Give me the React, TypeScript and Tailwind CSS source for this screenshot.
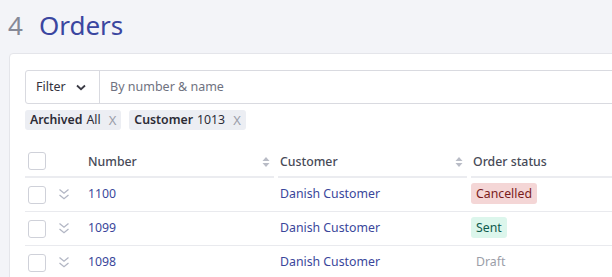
import React from "react";

const SortIcon = () => (
  <svg width="8" height="12" viewBox="0 0 8 12" className="shrink-0">
    <path d="M4 1 L7.5 5 H0.5 Z" fill="#b9bcc6" />
    <path d="M4 11 L7.5 7 H0.5 Z" fill="#b9bcc6" />
  </svg>
);

const DoubleChevron = () => (
  <svg width="12" height="13" viewBox="0 0 12 13" fill="none" stroke="#b2b6c4" strokeWidth="1.3">
    <path d="M1.5 1.5 L6 5.2 L10.5 1.5" />
    <path d="M1.5 7 L6 10.7 L10.5 7" />
  </svg>
);

const Checkbox = () => (
  <div className="w-[18px] h-[18px] rounded-[3px] border border-[#cfd1d9] bg-white shrink-0" />
);

const Tag = ({ label, value }: { label: string; value: string }) => (
  <div className="flex items-center gap-[4px] h-[20px] px-[5px] rounded-[3px] bg-[#eceef3] text-[12.3px] text-[#2c2c36]">
    <span className="font-semibold">{label}</span>
    <span>{value}</span>
    <span className="ml-[4px] text-[#9a9da9] text-[13px] leading-none">X</span>
  </div>
);

const rows = [
  { number: "1100", customer: "Danish Customer", status: "Cancelled" },
  { number: "1099", customer: "Danish Customer", status: "Sent" },
  { number: "1098", customer: "Danish Customer", status: "Draft" },
];

const Status = ({ status }: { status: string }) => {
  if (status === "Cancelled")
    return <span className="px-[5px] py-[2px] rounded-[3px] bg-[#f4d6d6] text-[#7a1c1c]">Cancelled</span>;
  if (status === "Sent")
    return <span className="px-[5px] py-[2px] rounded-[3px] bg-[#dcf6ec] text-[#0d5a4c]">Sent</span>;
  return <span className="px-[5px] text-[#9b9ea8]">{status}</span>;
};

export default function App() {
  return (
    <div className="w-[612px] h-[277px] overflow-hidden bg-[#f3f4f8] font-['Noto_Sans',sans-serif]">
      <div className="flex items-baseline gap-[16px] pl-[8px] pt-[8px] h-[53px] text-[26px] leading-[34px]">
        <span className="text-[#868997]">4</span>
        <span className="text-[#3a46a0]">Orders</span>
      </div>
      <div className="ml-[9px] w-[640px] h-[240px] bg-white rounded-[4px] border border-[#e4e5ea] pl-[15px] pt-[16px]">
        <div className="flex h-[34px] border border-[#d9dae0] rounded-[3px] text-[12.5px]">
          <div className="flex items-center gap-[10px] w-[74px] pl-[10px] border-r border-[#d9dae0] text-[#33333d]">
            Filter
            <svg width="10" height="7" viewBox="0 0 10 7" fill="none" stroke="#3a3a44" strokeWidth="1.8">
              <path d="M1 1.5 L5 5.2 L9 1.5" />
            </svg>
          </div>
          <div className="flex items-center pl-[10px] text-[#6f7280]">By number &amp; name</div>
        </div>
        <div className="flex gap-[8px] mt-[6px]">
          <Tag label="Archived" value="All" />
          <Tag label="Customer" value="1013" />
        </div>
        <div className="mt-[15px] text-[12.3px]">
          <div className="flex h-[33px]">
            <div className="w-[63px] flex items-center pl-[3px] pt-[1px] border-b-2 border-[#ebecf0]">
              <Checkbox />
            </div>
            <div className="w-[186px] flex items-center justify-between pr-[4px] pt-[3px] border-b-2 border-[#ebecf0] text-[#474a57] font-medium">
              Number
              <SortIcon />
            </div>
            <div className="w-[189px] ml-[4px] flex items-center justify-between pl-[2px] pr-[4px] pt-[3px] border-b-2 border-[#ebecf0] text-[#474a57] font-medium">
              Customer
              <SortIcon />
            </div>
            <div className="flex-1 ml-[4px] flex items-center pl-[2px] pt-[3px] border-b-2 border-[#ebecf0] text-[#474a57] font-medium">
              Order status
            </div>
          </div>
          {rows.map((r) => (
            <div key={r.number} className="flex items-center h-[34px] border-b border-[#e9eaee]">
              <div className="w-[63px] flex items-center gap-[12px] pl-[3px]">
                <Checkbox />
                <DoubleChevron />
              </div>
              <div className="w-[190px] text-[#3a469b]">{r.number}</div>
              <div className="w-[193px] pl-[2px] text-[#3a469b]">{r.customer}</div>
              <div>
                <Status status={r.status} />
              </div>
            </div>
          ))}
        </div>
      </div>
    </div>
  );
}
